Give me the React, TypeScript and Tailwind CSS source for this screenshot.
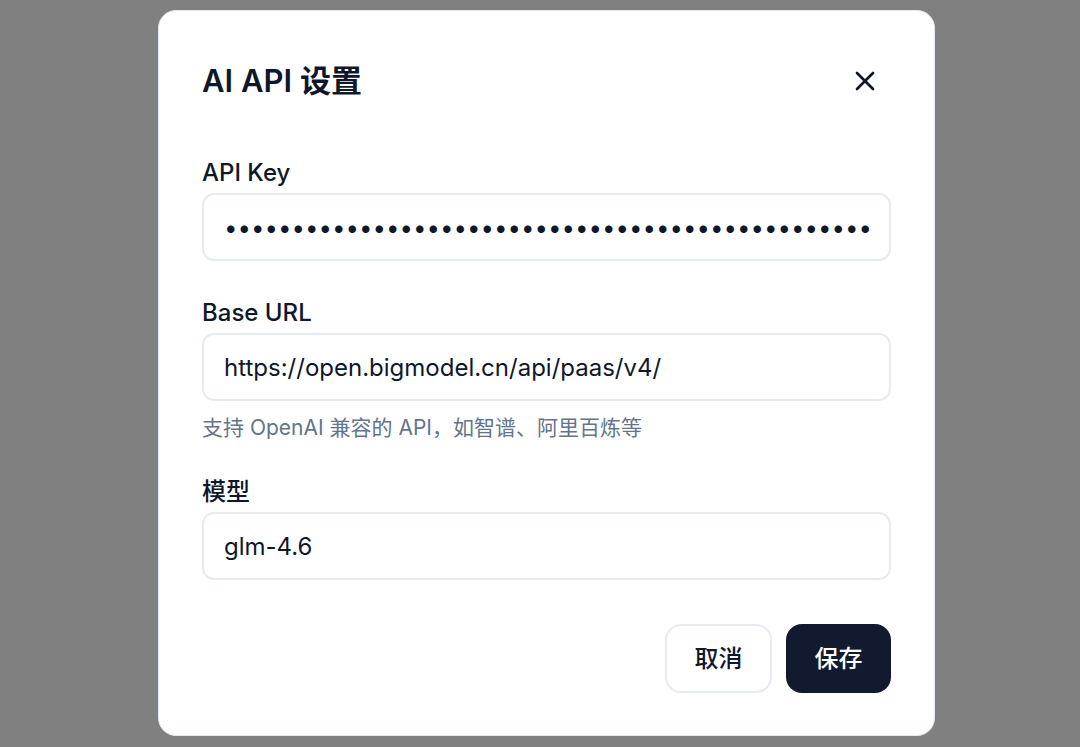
import React, { useState } from 'react';
import { X } from 'lucide-react';

const font = "font-['Inter','Noto_Sans_CJK_SC',sans-serif]";

interface FieldProps {
  label: string;
  value: string;
  type?: string;
  onChange: (v: string) => void;
}

function Field({ label, value, type = 'text', onChange }: FieldProps) {
  return (
    <div className="flex flex-col">
      <label className="text-[24px] leading-[24px] font-medium text-[#0f172a]">{label}</label>
      <input
        type={type}
        value={value}
        onChange={(e) => onChange(e.target.value)}
        className={`mt-[8px] h-[68px] w-full rounded-[12px] border-2 border-[#e6eaf1] bg-white px-[20px] text-[24px] text-[#0f172a] outline-none ${font}`}
      />
    </div>
  );
}

export default function App() {
  const [apiKey, setApiKey] = useState('sk-7f3a9c2e41b84d0a9e6f5c1b2d8a7e3f.Xy9QwErTyUiOpAsDfGhJkL');
  const [baseUrl, setBaseUrl] = useState('https://open.bigmodel.cn/api/paas/v4/');
  const [model, setModel] = useState('glm-4.6');

  return (
    <div className={`w-[1080px] h-[747px] bg-[#808080] flex pl-[158px] pt-[10px] ${font}`}>
      <div className="w-[777px] h-[726px] rounded-[18px] border border-[#e2e8f0] bg-white px-[43px] pt-[50px] flex flex-col">
        {/* header */}
        <div className="flex items-center justify-between">
          <h2 className="text-[31px] leading-[40px] font-semibold text-[#0f172a]">AI API 设置</h2>
          <button className="mr-[10px] text-[#0f172a]">
            <X className="w-[32px] h-[32px]" strokeWidth={2} />
          </button>
        </div>

        <div className="mt-[60px]">
          <Field label="API Key" type="password" value={apiKey} onChange={setApiKey} />
        </div>

        <div className="mt-[40px]">
          <Field label="Base URL" value={baseUrl} onChange={setBaseUrl} />
          <p className="mt-[13px] text-[21px] leading-[28px] text-[#64748b]">
            支持 OpenAI 兼容的 API，如智谱、阿里百炼等
          </p>
        </div>

        <div className="mt-[38px]">
          <Field label="模型" value={model} onChange={setModel} />
        </div>

        <div className="mt-[44px] flex justify-end gap-[14px]">
          <button className="h-[69px] w-[107px] rounded-[16px] border-2 border-[#e6eaf1] bg-white text-[24px] font-medium text-[#0f172a]">
            取消
          </button>
          <button className="h-[69px] w-[105px] rounded-[16px] bg-[#111a2e] text-[24px] font-medium text-white">
            保存
          </button>
        </div>
      </div>
    </div>
  );
}
